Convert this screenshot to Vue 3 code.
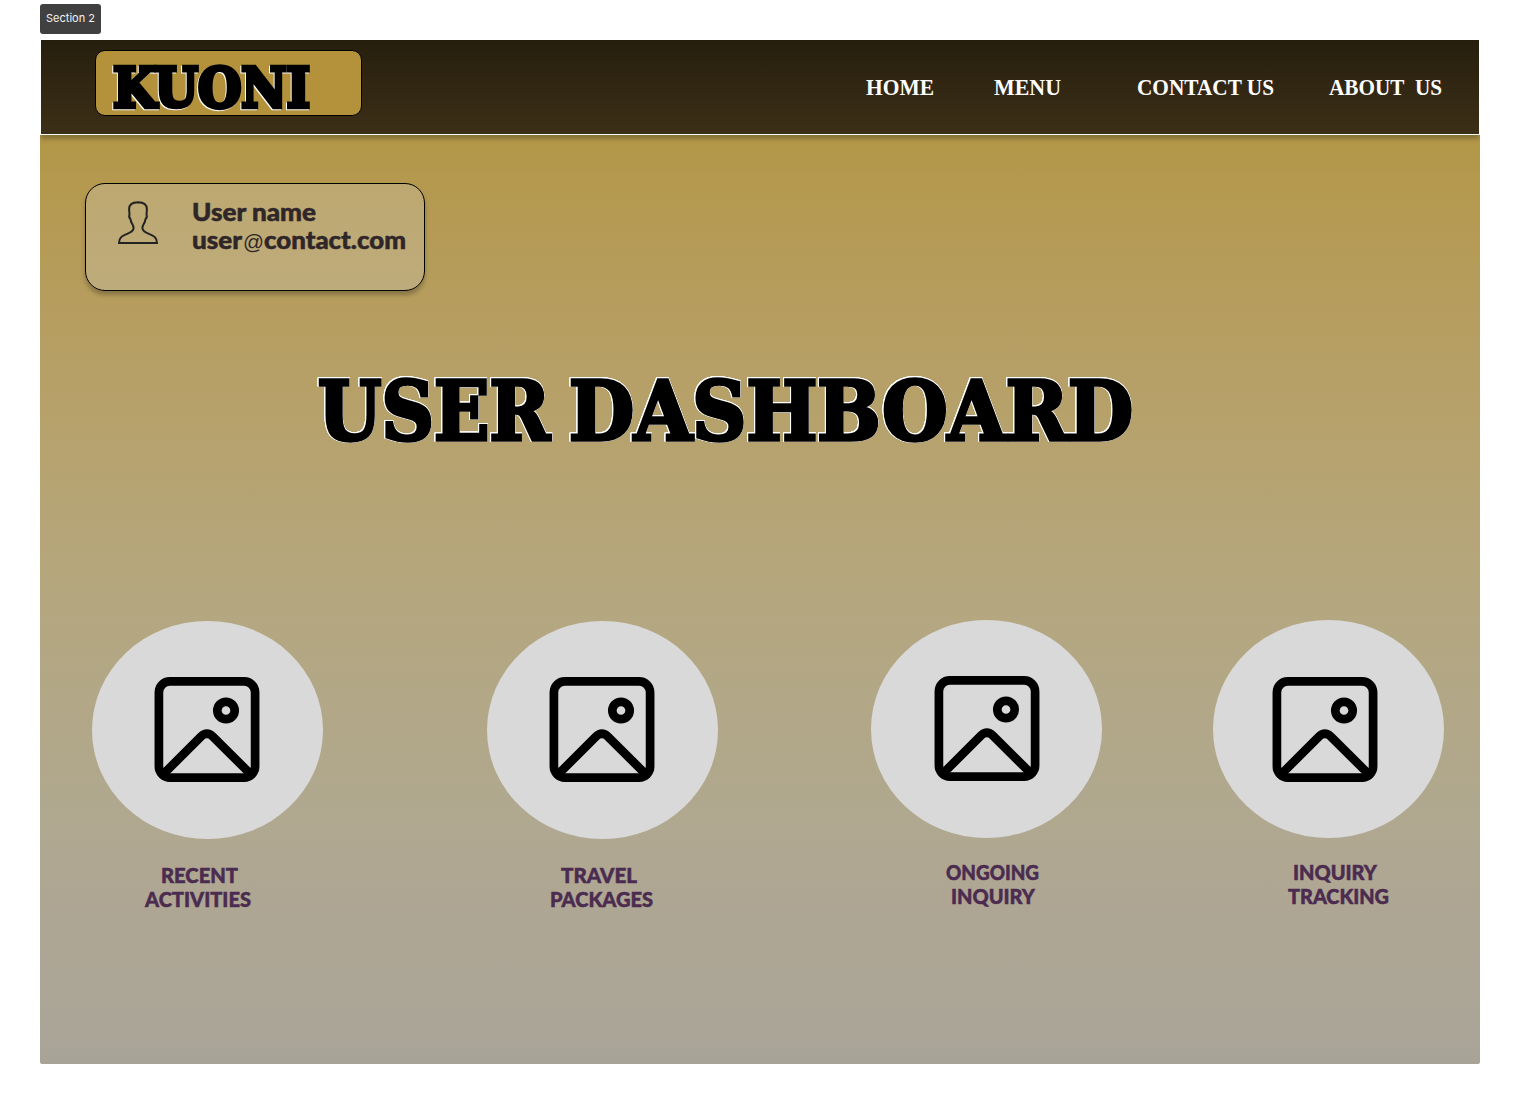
<script setup>
const links = [
  { label: 'HOME', slug: 'home', width: 68 },
  { label: 'MENU', slug: 'menu', width: 67 },
  { label: 'CONTACT US', slug: 'contact', width: 137 },
  { label: 'ABOUT\u00a0 US', slug: 'about', width: 113 },
]

const tiles = [
  { slug: 'recent', lines: [['RECENT', 77, 16], ['ACTIVITIES', 106, 0]] },
  { slug: 'travel', lines: [['TRAVEL', 76, 11], ['PACKAGES', 103, 0]] },
  { slug: 'ongoing', lines: [['ONGOING', 93, 0], ['INQUIRY', 84, 5]] },
  { slug: 'tracking', lines: [['INQUIRY', 84, 5], ['TRACKING', 101, 0]] },
]
</script>

<template>
  <div class="page">
    <div class="section-tag">Section 2</div>

    <main class="board">
      <header class="topbar">
        <div class="logo">
          <svg width="265" height="64">
            <text class="logo-text" x="17" y="56" textLength="197" lengthAdjust="spacingAndGlyphs">KUONI</text>
          </svg>
        </div>
        <nav class="nav">
          <a v-for="link in links" :key="link.slug" :class="['nav-link', link.slug]">
            <svg :width="link.width" height="30">
              <text x="0" y="22" :textLength="link.width" lengthAdjust="spacingAndGlyphs">{{ link.label }}</text>
            </svg>
          </a>
        </nav>
      </header>

      <section class="user-card">
        <svg class="avatar" width="40" height="43" viewBox="0 0 40 43">
          <path d="M1 42C1 36.500 4.500 34.800 8 33.300C12 31.600 15.600 30.500 15.600 27C15.600 24.500 14.200 23 13.200 21C12.700 19.500 12.800 18.800 12.400 18C10.900 16.500 10.900 15 11.500 13.500L11.100 8C11.100 3.500 14.500 1.300 20 1.200C25.500 1.300 28.900 3.500 28.900 8L28.500 13.500C29.100 15 29.100 16.500 27.600 18C27.200 18.800 27.300 19.500 26.800 21C25.800 23 24.400 24.500 24.400 27C24.400 30.500 28 31.600 32 33.300C35.500 34.800 39 36.500 39 42Z" />
        </svg>
        <svg class="user-text" width="216" height="70">
          <text x="0" y="28" textLength="124" lengthAdjust="spacingAndGlyphs">User name</text>
          <text x="0" y="56" textLength="50" lengthAdjust="spacingAndGlyphs">user</text>
          <text class="at" x="51" y="56" textLength="21" lengthAdjust="spacingAndGlyphs">@</text>
          <text x="72" y="56" textLength="142" lengthAdjust="spacingAndGlyphs">contact.com</text>
        </svg>
      </section>

      <h1 class="title">
        <svg width="816" height="90">
          <text x="0" y="74.500" textLength="232" lengthAdjust="spacingAndGlyphs">USER</text>
          <text x="251" y="74.500" textLength="564" lengthAdjust="spacingAndGlyphs">DASHBOARD</text>
        </svg>
      </h1>

      <section class="tiles">
        <article v-for="tile in tiles" :key="tile.slug" :class="['tile', tile.slug]">
          <div class="disc">
            <svg class="picture" width="106" height="105" viewBox="-0.500 0 106 105">
              <rect x="4.400" y="4.400" width="96.200" height="96.200" rx="11" />
              <circle cx="71.500" cy="33.500" r="8.700" />
              <path d="M9 97L46.400 59.600Q52.400 54 58.400 59.600L96 97" />
            </svg>
          </div>
          <div class="caption">
            <svg v-for="line in tile.lines" :key="line[0]" :width="line[1] + line[2]" height="24">
              <text :x="line[2]" y="19.500" :textLength="line[1]" lengthAdjust="spacingAndGlyphs">{{ line[0] }}</text>
            </svg>
          </div>
        </article>
      </section>
    </main>
  </div>
</template>

<style>
body {
  margin: 0;
  background: #fff;
}
</style>

<style scoped>
.page {
  box-sizing: border-box;
  width: 1520px;
  height: 1104px;
  padding: 4px 40px 0;
  overflow: hidden;
}
svg {
  display: block;
  overflow: visible;
}
.section-tag {
  box-sizing: border-box;
  width: 61px;
  height: 30px;
  margin-bottom: 6px;
  border-radius: 3px;
  background: #404040;
  color: #f2f2f2;
  font: 11px/29px Inter, sans-serif;
  text-align: center;
  white-space: nowrap;
}
.board {
  height: 1024px;
  display: flex;
  flex-direction: column;
  align-items: flex-start;
  border-radius: 0 0 2px 2px;
  background: linear-gradient(180deg, #b2954a 0, #b39748 95px, #b69d5e 260px, #b6a370 420px, #b4a780 570px, #b0a88e 760px, #aea694 880px, #aba597 975px, #a7a497 1024px);
}
.topbar {
  box-sizing: border-box;
  width: 1438px;
  height: 95px;
  margin-left: 1px;
  display: flex;
  align-items: flex-start;
  border-bottom: 1px solid #fff;
  background: linear-gradient(180deg, #261e0d, #3c2f17);
  box-shadow: -1px 0 0 #fff, 1px 0 0 #fff, 0 4px 4px rgba(0, 0, 0, 0.25);
  clip-path: inset(0 -1px -9px -1px);
}
.logo {
  box-sizing: border-box;
  width: 267px;
  height: 66px;
  margin: 10px 0 0 54px;
  border: 1px solid #000;
  border-radius: 10px;
  background: #b3923b;
}
.logo-text {
  font: bold 54px "DejaVu Serif", serif;
  fill: #000;
  stroke: #000;
  stroke-width: 4.5px;
  filter: drop-shadow(-0.6px 1px 0 #fff);
}
.nav {
  display: flex;
  margin: 33px 0 0 504px;
}
.nav-link text {
  font: bold 24px "Liberation Serif", serif;
  fill: #fff;
}
.menu {
  margin-left: 60px;
}
.contact {
  margin-left: 76px;
}
.about {
  margin-left: 55px;
}
.user-card {
  box-sizing: border-box;
  width: 340px;
  height: 108px;
  margin: 48px 0 0 45px;
  display: flex;
  align-items: flex-start;
  border: 1px solid #000;
  border-radius: 20px;
  background: rgba(217, 217, 217, 0.25);
  background-clip: padding-box;
  box-shadow: 0 4px 4px rgba(0, 0, 0, 0.25);
}
.avatar {
  margin: 17px 0 0 32px;
  fill: none;
  stroke: #222;
  stroke-width: 2;
  stroke-linejoin: miter;
}
.user-text {
  margin: 9px 0 0 34px;
}
.user-text text {
  font: 900 24px Lato, sans-serif;
  fill: #2f2629;
  stroke: #2f2629;
  stroke-width: 0.5px;
}
.user-text .at {
  font: 21px "Liberation Sans", sans-serif;
  stroke: none;
}
.title {
  margin: 74px 0 0 278px;
}
.title text {
  font: bold 82px "DejaVu Serif Condensed", "DejaVu Serif", serif;
  fill: #000;
  stroke: #000;
  stroke-width: 3.5px;
  filter: drop-shadow(0.5px 0 0 #fff) drop-shadow(-0.5px 0 0 #fff) drop-shadow(0 0.5px 0 #fff) drop-shadow(0 -0.5px 0 #fff);
}
.tiles {
  display: flex;
  align-items: flex-start;
  margin: 165px 0 0 52px;
}
.tile {
  width: 231px;
}
.recent,
.travel {
  margin-top: 1px;
}
.travel {
  margin-left: 164px;
}
.ongoing {
  margin-left: 153px;
}
.tracking {
  margin-left: 111px;
}
.disc {
  box-sizing: border-box;
  height: 218px;
  padding: 56px 0 0 62px;
  border-radius: 50%;
  background: #d9d9d9;
}
.ongoing .disc {
  padding-left: 63px;
}
.tracking .disc {
  padding: 57px 0 0 59px;
}
.picture {
  fill: none;
  stroke: #000;
  stroke-width: 8.700;
}
.caption {
  margin: 24px 0 0 53px;
}
.travel .caption {
  margin-left: 63px;
}
.ongoing .caption,
.tracking .caption {
  margin: 22px 0 0 75px;
}
.caption text {
  font: 900 20px Lato, sans-serif;
  fill: #4b2c50;
  stroke: #4b2c50;
  stroke-width: 0.5px;
}
</style>
